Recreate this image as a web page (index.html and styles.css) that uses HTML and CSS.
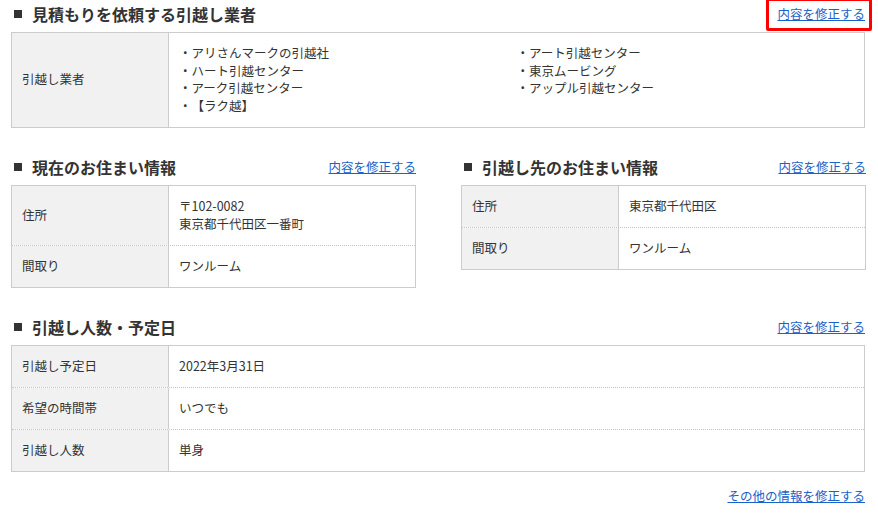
FILE: index.html
```html
<!DOCTYPE html>
<html lang="ja">
<head>
<meta charset="utf-8">
<title>見積もり依頼内容の確認</title>
<link rel="stylesheet" href="styles.css">
</head>
<body>
<main class="page">
  <section class="block">
    <div class="section-head">
      <h2 class="section-title">見積もりを依頼する引越し業者</h2>
      <span class="edit-wrap"><a class="edit-link" href="#">内容を修正する</a><span class="highlight"></span></span>
    </div>
    <div class="info">
      <div class="row">
        <div class="label">引越し業者</div>
        <div class="value">
          <ul class="company-list">
            <li>・アリさんマークの引越社</li>
            <li>・アート引越センター</li>
            <li>・ハート引越センター</li>
            <li>・東京ムービング</li>
            <li>・アーク引越センター</li>
            <li>・アップル引越センター</li>
            <li>・【ラク越】</li>
          </ul>
        </div>
      </div>
    </div>
  </section>

  <div class="block pair">
    <section>
      <div class="section-head">
        <h2 class="section-title">現在のお住まい情報</h2>
        <a class="edit-link" href="#">内容を修正する</a>
      </div>
      <div class="info">
        <div class="row">
          <div class="label">住所</div>
          <div class="value">〒102-0082<br>東京都千代田区一番町</div>
        </div>
        <div class="row">
          <div class="label">間取り</div>
          <div class="value">ワンルーム</div>
        </div>
      </div>
    </section>
    <section>
      <div class="section-head">
        <h2 class="section-title">引越し先のお住まい情報</h2>
        <a class="edit-link" href="#">内容を修正する</a>
      </div>
      <div class="info">
        <div class="row">
          <div class="label">住所</div>
          <div class="value">東京都千代田区</div>
        </div>
        <div class="row">
          <div class="label">間取り</div>
          <div class="value">ワンルーム</div>
        </div>
      </div>
    </section>
  </div>

  <section class="block">
    <div class="section-head">
      <h2 class="section-title">引越し人数・予定日</h2>
      <a class="edit-link" href="#">内容を修正する</a>
    </div>
    <div class="info">
      <div class="row">
        <div class="label">引越し予定日</div>
        <div class="value">2022年3月31日</div>
      </div>
      <div class="row">
        <div class="label">希望の時間帯</div>
        <div class="value">いつでも</div>
      </div>
      <div class="row">
        <div class="label">引越し人数</div>
        <div class="value">単身</div>
      </div>
    </div>
  </section>

  <div class="footer-link">
    <a class="edit-link" href="#">その他の情報を修正する</a>
  </div>
</main>
</body>
</html>
```
FILE: styles.css
```css
* {
  box-sizing: border-box;
}

html, body {
  margin: 0;
  padding: 0;
  background: #fff;
}

body {
  font-family: "Noto Sans CJK JP", "Noto Sans", sans-serif;
  font-size: 12.5px;
  line-height: 17.5px;
  color: #333;
  text-spacing-trim: space-all;
}

.page {
  padding: 2px 13px 0 11px;
}

.block + .block {
  margin-top: 27.5px;
}

.section-head {
  display: flex;
  align-items: center;
  justify-content: space-between;
  height: 24px;
  margin-bottom: 6px;
}

.section-title {
  display: flex;
  align-items: center;
  margin: 0;
  padding-left: 3px;
  font-size: 16px;
  font-weight: bold;
  line-height: 24px;
  color: #333;
}

.section-title::before {
  content: "";
  width: 8px;
  height: 8px;
  margin-right: 10px;
  background: #333;
}

.edit-link {
  font-size: 12.5px;
  line-height: 17.5px;
  color: #1a62c9;
  text-decoration: underline;
}

.edit-wrap {
  position: relative;
  display: inline-block;
  line-height: 17.5px;
}

/* red outline drawn around the top edit link */
.highlight {
  position: absolute;
  left: -11px;
  right: -7px;
  top: -7px;
  bottom: -8px;
  border: 3px solid #f00;
  border-radius: 2px;
  pointer-events: none;
}

.info {
  border: 1px solid #ccc;
}

.row {
  display: grid;
  grid-template-columns: 157px 1fr;
}

.row + .row {
  border-top: 1px dotted #c4c4c4;
}

.label {
  display: flex;
  align-items: center;
  padding: 11px 10px 12.5px;
  background: #f1f1f1;
  border-right: 1px solid #ccc;
}

.value {
  padding: 11px 10px 12.5px;
}

.company-list {
  display: grid;
  grid-template-columns: 1fr 1fr;
  margin: 0;
  padding: 0;
  list-style: none;
}

.pair {
  display: grid;
  grid-template-columns: 405px 405px;
  column-gap: 45px;
  align-items: start;
}

.footer-link {
  margin-top: 15px;
  line-height: 17.5px;
  text-align: right;
}
```
